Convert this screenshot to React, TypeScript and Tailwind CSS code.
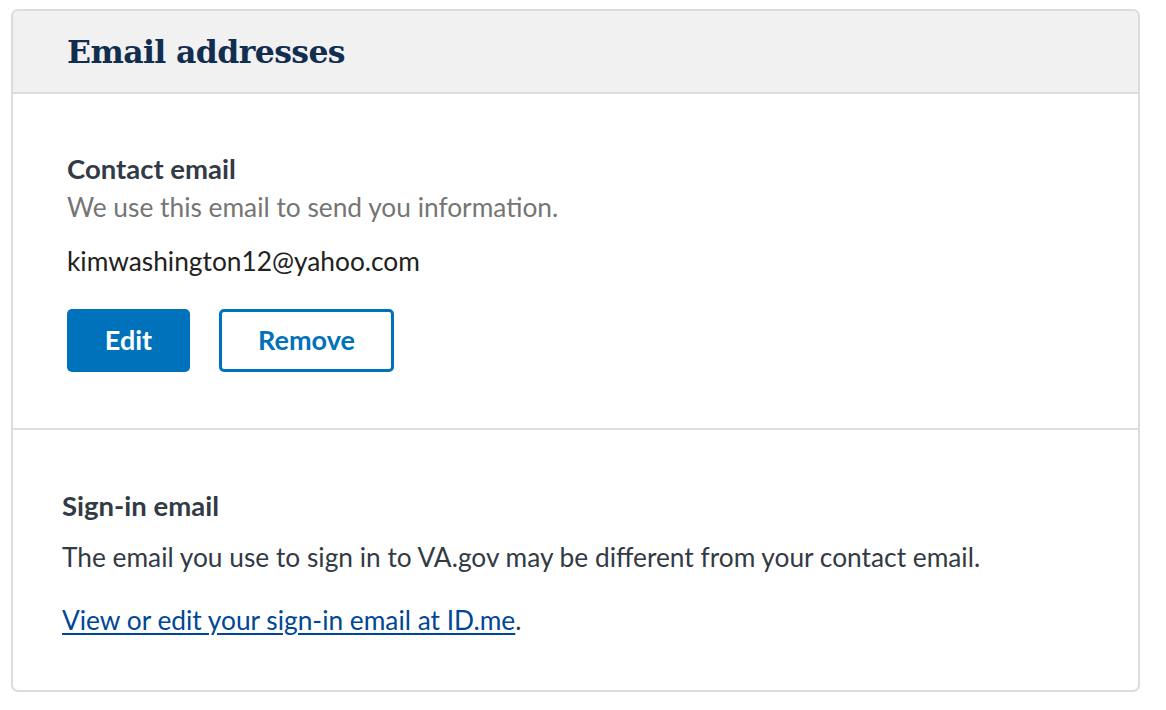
import React from 'react';

const sans = "font-['Lato','Liberation_Sans',sans-serif]";

const ContactEmail: React.FC = () => (
    <div className="h-[336px] pl-[54px] pt-[60px] border-b-2 border-[#dedede]">
        <h3 className="text-[27.5px] leading-[30px] font-bold text-[#323a45]">Contact email</h3>
        <p className="text-[26.3px] leading-[30px] text-[#757575] mt-[8px]">We use this email to send you information.</p>
        <p className="text-[26.3px] leading-[30px] text-[#212121] mt-[24px]">kimwashington12@yahoo.com</p>
        <div className="flex gap-[29px] mt-[33px]">
            <button className="w-[123px] h-[63px] rounded-[5px] bg-[#0071bb] text-white text-[27px] font-bold">
                Edit
            </button>
            <button className="w-[175px] h-[63px] rounded-[5px] border-[3px] border-[#0071bb] bg-white text-[#0071bb] text-[27px] font-bold">
                Remove
            </button>
        </div>
    </div>
);

const SignInEmail: React.FC = () => (
    <div className="h-[260px] pl-[49px] pt-[61px]">
        <h3 className="text-[27.5px] leading-[30px] font-bold text-[#323a45]">Sign-in email</h3>
        <p className="text-[26.3px] leading-[30px] text-[#323a45] mt-[21px]">
            The email you use to sign in to VA.gov may be different from your contact email.
        </p>
        <p className="text-[26.3px] leading-[30px] text-[#323a45] mt-[33px]">
            <a href="#" className="text-[#004795] underline underline-offset-[3px]">View or edit your sign-in email at ID.me</a>.
        </p>
    </div>
);

export default function App() {
    return (
        <div className={`${sans} bg-white min-h-[710px] pl-[11px] pt-[9px]`}>
            <div className="w-[1129px] border-2 border-[#dcdcdc] rounded-[7px] overflow-hidden">
                <div className="h-[83px] bg-[#f1f1f1] border-b-2 border-[#dcdcdc] pl-[54px] flex items-center">
                    <h2 className="font-['DejaVu_Serif',serif] font-bold text-[31.5px] text-[#112e51] tracking-[-0.6px]">
                        Email addresses
                    </h2>
                </div>
                <ContactEmail />
                <SignInEmail />
            </div>
        </div>
    );
}
